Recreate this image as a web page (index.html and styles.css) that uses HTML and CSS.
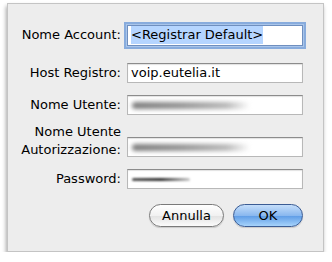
FILE: index.html
```html
<!DOCTYPE html>
<html lang="it">
<head>
    <meta charset="UTF-8">
    <title>Account SIP</title>
    <link rel="stylesheet" href="styles.css">
</head>
<body>
    <div class="sheet">
        <div class="form">
            <label class="lbl row-account">Nome Account:</label>
            <div class="field focused row-account"><span class="sel">&lt;Registrar Default&gt;</span></div>

            <label class="lbl row-host">Host Registro:</label>
            <div class="field row-host">voip.eutelia.it</div>

            <label class="lbl row-user">Nome Utente:</label>
            <div class="field row-user"><span class="smudge smudge-user"></span></div>

            <label class="lbl two-line row-auth">Nome Utente<br>Autorizzazione:</label>
            <div class="field row-auth"><span class="smudge smudge-user"></span></div>

            <label class="lbl row-pass">Password:</label>
            <div class="field row-pass"><span class="smudge smudge-pass"></span></div>
        </div>

        <div class="buttons">
            <button class="btn">Annulla</button>
            <button class="btn btn-default">OK</button>
        </div>
    </div>
</body>
</html>
```

FILE: styles.css
```css
body {
    margin: 0;
    padding: 0;
    background: #ffffff;
    font-family: "DejaVu Sans", "Lucida Grande", sans-serif;
    font-size: 13px;
    color: #000;
}

.sheet {
    width: 317px;
    height: 249px;
    margin: 3px 0 0 7px;
    background: #ededed;
    border: 1px solid #c4c4c4;
    box-shadow: -1px 3px 4px rgba(0, 0, 0, 0.35);
    box-sizing: border-box;
    padding: 20px 20px 0 0;
}

.form {
    display: grid;
    grid-template-columns: 113px 176px;
    column-gap: 6px;
    align-items: center;
}

.lbl {
    text-align: right;
    white-space: nowrap;
    line-height: 16px;
}

.two-line {
    line-height: 18px;
    align-self: end;
    margin-bottom: -2px;
}

.field {
    height: 20px;
    box-sizing: border-box;
    background: #fff;
    border: 1px solid #b8b8b8;
    border-top-color: #8c8c8c;
    box-shadow: inset 0 1px 1px rgba(0, 0, 0, 0.12);
    padding: 0 3px;
    line-height: 18px;
    white-space: nowrap;
    overflow: hidden;
    position: relative;
}

.focused {
    height: 21px;
    margin-top: 1px;
    box-shadow: 0 0 0 1px #a9c5ea, 0 0 0 3px #88acdd;
    border-color: #6f8fbf;
}

.sel {
    background: #b5d5ff;
    padding: 1px 0 2px;
}

.row-account { grid-row: 1; }
.row-host { grid-row: 2; margin-top: 17px; }
.row-user { grid-row: 3; margin-top: 12px; }
.row-auth { grid-row: 4; margin-top: 22px; }
.row-pass { grid-row: 5; margin-top: 12px; }

.lbl.row-auth { margin-top: 8px; }

.smudge {
    position: absolute;
    top: 6px;
    left: 4px;
    height: 7px;
    border-radius: 4px;
    filter: blur(2px);
}

.smudge-user {
    width: 118px;
    background: linear-gradient(to right, #7d7d7d, #939393 40%, #b8b8b8 80%, rgba(200, 200, 200, 0));
}

.smudge-pass {
    top: 8px;
    width: 58px;
    height: 3px;
    filter: blur(1px);
    background: linear-gradient(to right, #555, #333 50%, rgba(80, 80, 80, 0.3));
}

.buttons {
    display: flex;
    justify-content: flex-end;
    gap: 9px;
    margin-top: 15px;
}

.btn {
    font-family: inherit;
    font-size: 13px;
    height: 23px;
    border-radius: 12px;
    border: 1px solid #7a7a7a;
    background: linear-gradient(#ffffff, #f1f1f1 50%, #e2e2e2 51%, #fbfbfb);
    padding: 0;
    width: 75px;
    box-shadow: 0 1px 1px rgba(0, 0, 0, 0.15);
    color: #000;
}

.btn-default {
    width: 70px;
    border-color: #3b5c94;
    background: linear-gradient(#c5defa, #8ab8ef 50%, #5d9be6 51%, #a6d3fb);
}
```
